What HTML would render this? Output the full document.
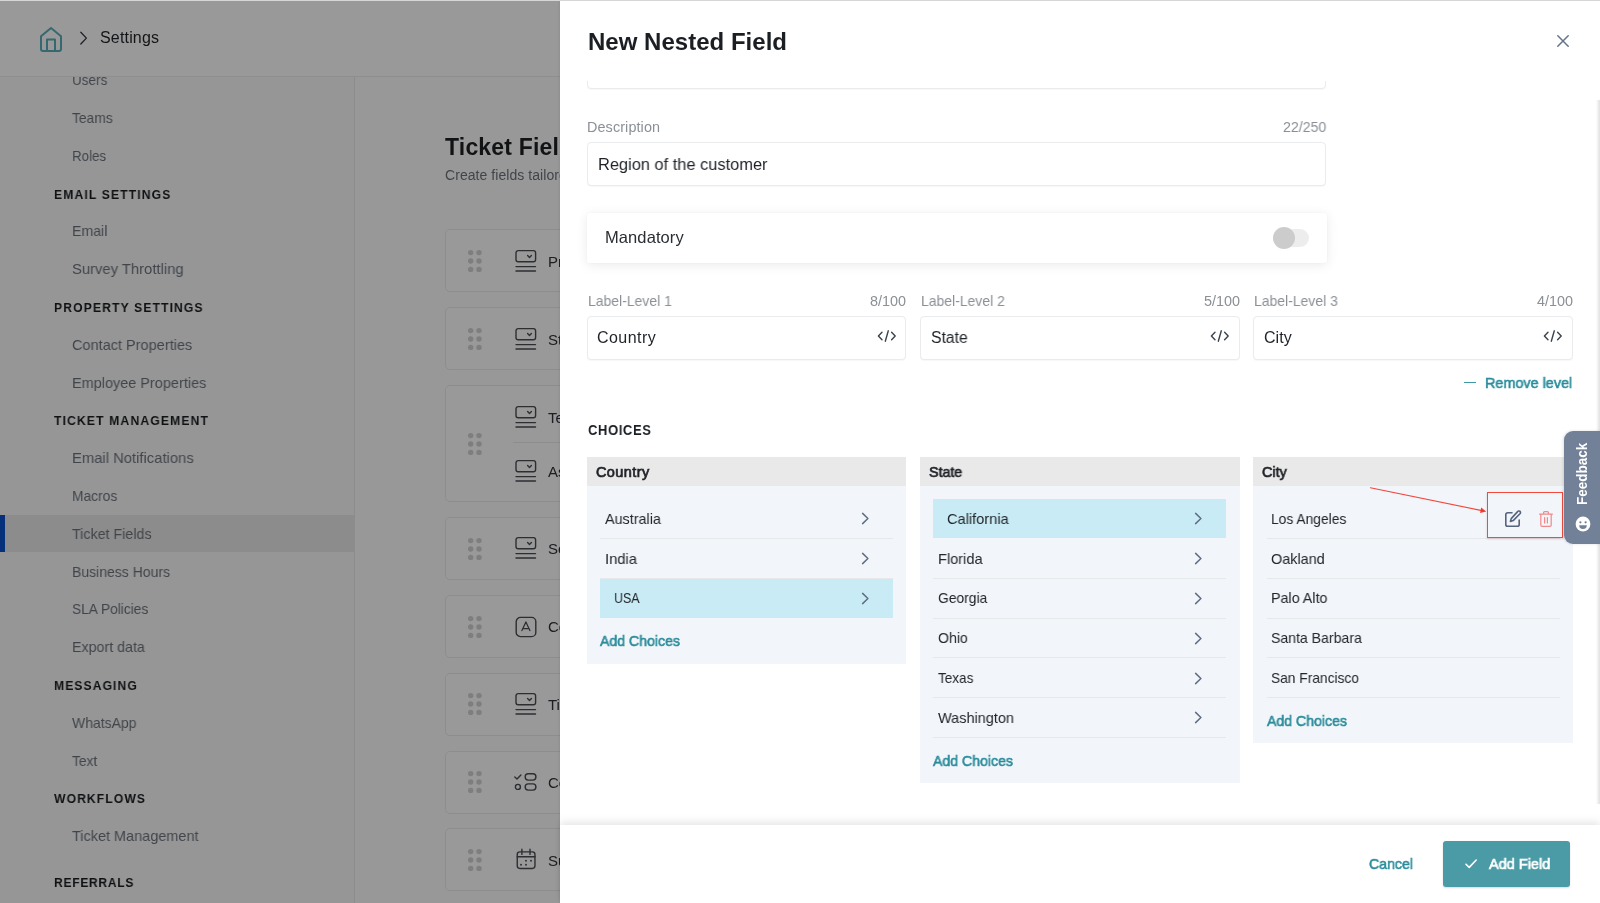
<!DOCTYPE html>
<html lang="en"><head><meta charset="utf-8"><title>New Nested Field - Settings</title>
<style>
*{box-sizing:border-box;margin:0;padding:0}
html,body{width:1600px;height:903px;overflow:hidden;background:#fff}
body{font-family:"Liberation Sans",Arial,sans-serif;color:#1f2328;-webkit-font-smoothing:antialiased}
#app{position:relative;width:1600px;height:903px;overflow:hidden;background:#fff}
.t{position:absolute;white-space:pre;display:block;transform-origin:0 50%;will-change:transform}
svg{position:absolute;overflow:visible;fill:none}

/* top bar */
.topbar{position:absolute;left:0;top:0;width:1600px;height:76.5px;background:#fff;border-bottom:1px solid #ededed;z-index:3}
.home{left:37.6px;top:24.5px;stroke:#5aaebb;stroke-width:2;stroke-linejoin:round;stroke-linecap:round}
.crumb{left:79px;top:30.3px;stroke:#33373c;stroke-width:1.3;stroke-linecap:round;stroke-linejoin:round}

/* sidebar */
.sidebar{position:absolute;left:0;top:76px;width:355px;height:827px;background:#fbfbfb;border-right:1px solid #eaeaea;overflow:hidden;z-index:1}
.sel{position:absolute;left:0;width:354px;height:37.2px;background:#e9e9e9;border-left:5px solid #0b53cc}

/* main */
.content{position:absolute;left:355px;top:76px;width:1245px;height:827px;background:#fefefe;overflow:hidden;z-index:1}
.card{position:absolute;left:90.3px;width:1110px;background:#fff;border:1px solid #ececec;border-radius:5px}
.cdiv{position:absolute;left:158px;width:1040px;height:1px;background:#ececec}
.grip{fill:#d2d2d2}
.fico{stroke:#4a4e54;stroke-width:1.4;stroke-linecap:round;stroke-linejoin:round}

/* scrim */
.scrim{position:absolute;left:0;top:0;width:1600px;height:903px;background:rgba(0,0,0,.4);z-index:5}

/* drawer */
.drawer{position:absolute;left:560px;top:0;width:1040px;height:903px;background:#fff;z-index:6;box-shadow:-1px 0 3px rgba(0,0,0,.08)}
.close{left:996.2px;top:33.8px;stroke:#64738a;stroke-width:1.5;stroke-linecap:round}
.body{position:absolute;left:0;top:81px;width:1040px;height:744px;overflow:hidden}
.inp{position:absolute;border:1px solid #e9ebec;border-radius:4px;background:#fff;box-shadow:0 1px 1px rgba(0,0,0,.03)}
.mand{position:absolute;left:27px;width:739.6px;height:49.5px;background:#fff;border-radius:3px;box-shadow:0 2px 12px rgba(0,0,0,.085),0 0 2px rgba(0,0,0,.04)}
.track{position:absolute;left:714px;width:35px;height:17.5px;border-radius:9px;background:#ededed}
.knob{position:absolute;left:713px;width:22px;height:22px;border-radius:11px;background:#cccccc}
.code{stroke:#3c434b;stroke-width:1.4;stroke-linecap:round;stroke-linejoin:round}
.dash{position:absolute;width:11.5px;height:1.3px;background:#3f98a6}
.col{position:absolute;background:#f2f5f9}
.colh{height:29px;background:#e9e9e9}
.hl{position:absolute;height:38.8px;background:#c9ebf5}
.sep{position:absolute;height:1px;background:#e6e8ea}
.chev{stroke:#5f6e84;stroke-width:1.5;stroke-linecap:round;stroke-linejoin:round}
.edit{stroke:#566480;stroke-width:1.6;stroke-linecap:round;stroke-linejoin:round}
.trash{stroke:#f1898b;stroke-width:1.2;stroke-linecap:round;stroke-linejoin:round}
.redbox{position:absolute;border:1.6px solid #f4493d;box-shadow:0 1px 2px rgba(120,0,0,.18)}
.arrow path{stroke:#f4463b;stroke-width:1.15;stroke-linecap:round}
.arrow .head{fill:#f23a2e;stroke:none}

.foot{position:absolute;left:0;top:825px;width:1040px;height:78px;background:#fff;box-shadow:0 -3px 8px rgba(0,0,0,.10)}
.btn{position:absolute;left:883.2px;top:16px;width:126.8px;height:46.3px;border-radius:3px;background:#4a9ba6;box-shadow:0 1px 2px rgba(0,0,0,.15)}
.check{left:905.3px;top:34.4px;stroke:#fff;stroke-width:1.6;stroke-linecap:round;stroke-linejoin:round}
.scrollshade{position:absolute;right:0;top:100px;width:4px;height:704px;background:linear-gradient(to right,rgba(0,0,0,0),rgba(0,0,0,.12))}

/* feedback */
.feedback{position:absolute;left:1564.2px;top:431px;width:40px;height:113.4px;background:#728198;border-radius:9px 0 0 9px;z-index:8;box-shadow:-1px 0 3px rgba(0,0,0,.12)}
.fbt{top:74.2px;left:10.1px;transform-origin:0 0;transform:rotate(-90deg) scaleX(.9);color:#fff;font-weight:700;font-size:15px;line-height:1;letter-spacing:0;will-change:auto}
.smile{left:10.9px;top:85.3px}
.topline{position:absolute;left:0;top:0;width:1600px;height:1.4px;background:#d6d6d6;z-index:9}

</style></head><body>
<div id="app">
<header class="topbar">
<svg class="home" width="26" height="28" viewBox="0 0 26 28"><path d="M3 11.2 L13 3 L23 11.2 V24 a2 2 0 0 1 -2 2 H5 a2 2 0 0 1 -2 -2 Z" /><path d="M9 26 V14.5 H17 V26"/></svg>
<svg class="crumb" width="10" height="16" viewBox="0 0 10 16"><path d="M1.8 2.2 L7.4 8.1 L1.8 14"/></svg>
<span class="t" style="left:100.18px;top:28.16px;font-size:16px;line-height:20px;color:#1f2328;letter-spacing:0.170px">Settings</span>
</header>
<nav class="sidebar">
<span class="t" style="left:71.70px;top:-5.75px;font-size:15px;line-height:19px;color:#6d747c;transform:scaleX(0.9012)">Users</span>
<span class="t" style="left:71.70px;top:32.05px;font-size:15px;line-height:19px;color:#6d747c;transform:scaleX(0.9211)">Teams</span>
<span class="t" style="left:71.70px;top:69.85px;font-size:15px;line-height:19px;color:#6d747c;transform:scaleX(0.8890)">Roles</span>
<span class="t" style="left:54.23px;top:109.52px;font-size:13.5px;line-height:17px;font-weight:700;color:#1b1d20;transform:scaleX(0.9000);letter-spacing:1.255px">EMAIL SETTINGS</span>
<span class="t" style="left:71.70px;top:145.45px;font-size:15px;line-height:19px;color:#6d747c;transform:scaleX(0.9436)">Email</span>
<span class="t" style="left:71.70px;top:183.25px;font-size:15px;line-height:19px;color:#6d747c;transform:scaleX(0.9867)">Survey Throttling</span>
<span class="t" style="left:54.23px;top:222.92px;font-size:13.5px;line-height:17px;font-weight:700;color:#1b1d20;transform:scaleX(0.9000);letter-spacing:1.239px">PROPERTY SETTINGS</span>
<span class="t" style="left:71.70px;top:258.85px;font-size:15px;line-height:19px;color:#6d747c;transform:scaleX(0.9675)">Contact Properties</span>
<span class="t" style="left:71.70px;top:296.65px;font-size:15px;line-height:19px;color:#6d747c;transform:scaleX(0.9646)">Employee Properties</span>
<span class="t" style="left:54.23px;top:336.32px;font-size:13.5px;line-height:17px;font-weight:700;color:#1b1d20;transform:scaleX(0.9000);letter-spacing:1.266px">TICKET MANAGEMENT</span>
<span class="t" style="left:71.70px;top:372.25px;font-size:15px;line-height:19px;color:#6d747c;transform:scaleX(0.9863)">Email Notifications</span>
<span class="t" style="left:71.70px;top:410.05px;font-size:15px;line-height:19px;color:#6d747c;transform:scaleX(0.9210)">Macros</span>
<div class="sel" style="top:438.5px"></div>
<span class="t" style="left:71.70px;top:447.85px;font-size:15px;line-height:19px;color:#6d747c;transform:scaleX(0.9517)">Ticket Fields</span>
<span class="t" style="left:71.70px;top:485.65px;font-size:15px;line-height:19px;color:#6d747c;transform:scaleX(0.9339)">Business Hours</span>
<span class="t" style="left:71.70px;top:523.45px;font-size:15px;line-height:19px;color:#6d747c;transform:scaleX(0.9138)">SLA Policies</span>
<span class="t" style="left:71.70px;top:561.25px;font-size:15px;line-height:19px;color:#6d747c;transform:scaleX(0.9502)">Export data</span>
<span class="t" style="left:54.23px;top:600.92px;font-size:13.5px;line-height:17px;font-weight:700;color:#1b1d20;transform:scaleX(0.9000);letter-spacing:1.186px">MESSAGING</span>
<span class="t" style="left:71.70px;top:636.85px;font-size:15px;line-height:19px;color:#6d747c;transform:scaleX(0.9320)">WhatsApp</span>
<span class="t" style="left:71.70px;top:674.65px;font-size:15px;line-height:19px;color:#6d747c;transform:scaleX(0.9195)">Text</span>
<span class="t" style="left:54.23px;top:714.32px;font-size:13.5px;line-height:17px;font-weight:700;color:#1b1d20;transform:scaleX(0.9000);letter-spacing:1.203px">WORKFLOWS</span>
<span class="t" style="left:71.70px;top:750.25px;font-size:15px;line-height:19px;color:#6d747c;transform:scaleX(0.9644)">Ticket Management</span>
<span class="t" style="left:54.23px;top:798.22px;font-size:13.5px;line-height:17px;font-weight:700;color:#1b1d20;transform:scaleX(0.9000);letter-spacing:0.713px">REFERRALS</span>
</nav>
<main class="content">
<span class="t" style="left:90.14px;top:57.13px;font-size:23px;line-height:29px;font-weight:700;color:#1d2024;letter-spacing:0.182px">Ticket Fields</span>
<span class="t" style="left:90.32px;top:89.75px;font-size:14px;line-height:18px;color:#6c737b;letter-spacing:0.056px">Create fields tailored to your business</span>
<section class="card" style="top:153.3px;height:63.0px"></section>
<svg class="grip" style="left:111.5px;top:172.8px" width="16" height="24" viewBox="0 0 16 24"><circle cx="3.7" cy="3.6" r="2.7"/><circle cx="12" cy="3.6" r="2.7"/><circle cx="3.7" cy="12" r="2.7"/><circle cx="12" cy="12" r="2.7"/><circle cx="3.7" cy="20.4" r="2.7"/><circle cx="12" cy="20.4" r="2.7"/></svg>
<svg class="fico" style="left:158.5px;top:172.8px" width="24" height="24" viewBox="0 0 24 24"><rect x="2" y="1.6" width="19.6" height="11.2" rx="2.2"/><path d="M13.6 6.6 l1.9 1.9 l1.9 -1.9"/><path d="M2 17.6 H21.5 M2 22 H21.5"/></svg>
<span class="t" style="left:193.10px;top:175.60px;font-size:15px;line-height:19px;color:#2f3338">Priority</span>
<section class="card" style="top:231.2px;height:63.0px"></section>
<svg class="grip" style="left:111.5px;top:250.7px" width="16" height="24" viewBox="0 0 16 24"><circle cx="3.7" cy="3.6" r="2.7"/><circle cx="12" cy="3.6" r="2.7"/><circle cx="3.7" cy="12" r="2.7"/><circle cx="12" cy="12" r="2.7"/><circle cx="3.7" cy="20.4" r="2.7"/><circle cx="12" cy="20.4" r="2.7"/></svg>
<svg class="fico" style="left:158.5px;top:250.7px" width="24" height="24" viewBox="0 0 24 24"><rect x="2" y="1.6" width="19.6" height="11.2" rx="2.2"/><path d="M13.6 6.6 l1.9 1.9 l1.9 -1.9"/><path d="M2 17.6 H21.5 M2 22 H21.5"/></svg>
<span class="t" style="left:193.10px;top:253.50px;font-size:15px;line-height:19px;color:#2f3338">Status</span>
<section class="card" style="top:309.0px;height:117.0px"></section>
<svg class="grip" style="left:111.5px;top:355.5px" width="16" height="24" viewBox="0 0 16 24"><circle cx="3.7" cy="3.6" r="2.7"/><circle cx="12" cy="3.6" r="2.7"/><circle cx="3.7" cy="12" r="2.7"/><circle cx="12" cy="12" r="2.7"/><circle cx="3.7" cy="20.4" r="2.7"/><circle cx="12" cy="20.4" r="2.7"/></svg>
<svg class="fico" style="left:158.5px;top:328.7px" width="24" height="24" viewBox="0 0 24 24"><rect x="2" y="1.6" width="19.6" height="11.2" rx="2.2"/><path d="M13.6 6.6 l1.9 1.9 l1.9 -1.9"/><path d="M2 17.6 H21.5 M2 22 H21.5"/></svg>
<span class="t" style="left:193.10px;top:331.50px;font-size:15px;line-height:19px;color:#2f3338">Team</span>
<svg class="fico" style="left:158.5px;top:382.9px" width="24" height="24" viewBox="0 0 24 24"><rect x="2" y="1.6" width="19.6" height="11.2" rx="2.2"/><path d="M13.6 6.6 l1.9 1.9 l1.9 -1.9"/><path d="M2 17.6 H21.5 M2 22 H21.5"/></svg>
<span class="t" style="left:193.10px;top:385.70px;font-size:15px;line-height:19px;color:#2f3338">Assignee</span>
<div class="cdiv" style="top:366.3px"></div>
<section class="card" style="top:440.8px;height:63.5px"></section>
<svg class="grip" style="left:111.5px;top:460.5px" width="16" height="24" viewBox="0 0 16 24"><circle cx="3.7" cy="3.6" r="2.7"/><circle cx="12" cy="3.6" r="2.7"/><circle cx="3.7" cy="12" r="2.7"/><circle cx="12" cy="12" r="2.7"/><circle cx="3.7" cy="20.4" r="2.7"/><circle cx="12" cy="20.4" r="2.7"/></svg>
<svg class="fico" style="left:158.5px;top:460.3px" width="24" height="24" viewBox="0 0 24 24"><rect x="2" y="1.6" width="19.6" height="11.2" rx="2.2"/><path d="M13.6 6.6 l1.9 1.9 l1.9 -1.9"/><path d="M2 17.6 H21.5 M2 22 H21.5"/></svg>
<span class="t" style="left:193.10px;top:463.10px;font-size:15px;line-height:19px;color:#2f3338">Source</span>
<section class="card" style="top:519.0px;height:63.0px"></section>
<svg class="grip" style="left:111.5px;top:538.5px" width="16" height="24" viewBox="0 0 16 24"><circle cx="3.7" cy="3.6" r="2.7"/><circle cx="12" cy="3.6" r="2.7"/><circle cx="3.7" cy="12" r="2.7"/><circle cx="12" cy="12" r="2.7"/><circle cx="3.7" cy="20.4" r="2.7"/><circle cx="12" cy="20.4" r="2.7"/></svg>
<svg class="fico" style="left:158.5px;top:538.5px" width="24" height="24" viewBox="0 0 24 24"><rect x="2.2" y="2.4" width="19.6" height="19.2" rx="4.2"/><path d="M7.9 15.6 L11.9 6.9 L15.9 15.6 M9.2 13.5 H14.6" stroke-width="1.25"/></svg>
<span class="t" style="left:193.10px;top:541.30px;font-size:15px;line-height:19px;color:#2f3338">Company</span>
<section class="card" style="top:596.7px;height:63.0px"></section>
<svg class="grip" style="left:111.5px;top:616.2px" width="16" height="24" viewBox="0 0 16 24"><circle cx="3.7" cy="3.6" r="2.7"/><circle cx="12" cy="3.6" r="2.7"/><circle cx="3.7" cy="12" r="2.7"/><circle cx="12" cy="12" r="2.7"/><circle cx="3.7" cy="20.4" r="2.7"/><circle cx="12" cy="20.4" r="2.7"/></svg>
<svg class="fico" style="left:158.5px;top:616.2px" width="24" height="24" viewBox="0 0 24 24"><rect x="2" y="1.6" width="19.6" height="11.2" rx="2.2"/><path d="M13.6 6.6 l1.9 1.9 l1.9 -1.9"/><path d="M2 17.6 H21.5 M2 22 H21.5"/></svg>
<span class="t" style="left:193.10px;top:619.00px;font-size:15px;line-height:19px;color:#2f3338">Title</span>
<section class="card" style="top:674.6px;height:63.0px"></section>
<svg class="grip" style="left:111.5px;top:694.1px" width="16" height="24" viewBox="0 0 16 24"><circle cx="3.7" cy="3.6" r="2.7"/><circle cx="12" cy="3.6" r="2.7"/><circle cx="3.7" cy="12" r="2.7"/><circle cx="12" cy="12" r="2.7"/><circle cx="3.7" cy="20.4" r="2.7"/><circle cx="12" cy="20.4" r="2.7"/></svg>
<svg class="fico" style="left:158.5px;top:694.1px" width="24" height="24" viewBox="0 0 24 24"><path d="M0.8 7.0 L3.0 9.0 L6.9 5.0"/><circle cx="3.9" cy="16.9" r="2.5"/><rect x="11.2" y="3.7" width="10.7" height="6.4" rx="3"/><rect x="11.2" y="13.9" width="10.7" height="6.2" rx="3"/></svg>
<span class="t" style="left:193.10px;top:696.90px;font-size:15px;line-height:19px;color:#2f3338">Contact</span>
<section class="card" style="top:752.4px;height:63.0px"></section>
<svg class="grip" style="left:111.5px;top:771.9px" width="16" height="24" viewBox="0 0 16 24"><circle cx="3.7" cy="3.6" r="2.7"/><circle cx="12" cy="3.6" r="2.7"/><circle cx="3.7" cy="12" r="2.7"/><circle cx="12" cy="12" r="2.7"/><circle cx="3.7" cy="20.4" r="2.7"/><circle cx="12" cy="20.4" r="2.7"/></svg>
<svg class="fico" style="left:158.5px;top:771.9px" width="24" height="24" viewBox="0 0 24 24"><rect x="3.25" y="3.85" width="17.7" height="16.6" rx="2.6"/><path d="M3.25 8.8 H20.95 M7.9 1.3 V6.4 M16 1.3 V6.4"/><path d="M12 12.7 h.01 M17 12.7 h.01 M7 16.8 h.01 M12 16.8 h.01" stroke-width="1.9"/></svg>
<span class="t" style="left:193.10px;top:774.70px;font-size:15px;line-height:19px;color:#2f3338">Submitted on</span>
</main>
<div class="scrim"></div>
<aside class="drawer">
<span class="t" style="left:28.37px;top:26.98px;font-size:24px;line-height:30px;font-weight:700;color:#1b1f24;letter-spacing:0.019px">New Nested Field</span>
<svg class="close" width="14" height="14" viewBox="0 0 14 14"><path d="M1.8 1.8 L12.2 12.2 M12.2 1.8 L1.8 12.2"/></svg>
<div class="body">
<div class="inp" style="left:27px;top:-41px;width:739px;height:48.8px"></div>
<span class="t" style="left:27.41px;top:36.91px;font-size:14.4px;line-height:18px;color:#8b9096;letter-spacing:0.102px">Description</span>
<span class="t" style="left:723.11px;top:36.91px;font-size:14.4px;line-height:18px;color:#8b9096;transform:scaleX(0.9837)">22/250</span>
<div class="inp" style="left:27px;top:61.0px;width:739px;height:44px"></div>
<span class="t" style="left:37.87px;top:73.18px;font-size:16.5px;line-height:21px;color:#1f2328;transform:scaleX(0.9936)">Region of the customer</span>
<div class="mand" style="top:132.0px"></div>
<span class="t" style="left:45.17px;top:146.08px;font-size:16.5px;line-height:21px;color:#2a2e33;letter-spacing:0.091px">Mandatory</span>
<div class="track" style="top:148.3px"></div>
<div class="knob" style="top:146.0px"></div>
<span class="t" style="left:27.51px;top:210.91px;font-size:14.4px;line-height:18px;color:#8b9096;transform:scaleX(0.9697)">Label-Level 1</span>
<span class="t" style="left:310.31px;top:210.91px;font-size:14.4px;line-height:18px;color:#8b9096;transform:scaleX(0.9912)">8/100</span>
<div class="inp" style="left:27.0px;top:235.0px;width:319.3px;height:44px"></div>
<span class="t" style="left:37.28px;top:247.36px;font-size:16px;line-height:20px;color:#1f2328;letter-spacing:0.445px">Country</span>
<svg class="code" style="left:316.9px;top:248.8px" width="20" height="12" viewBox="0 0 20 12"><path d="M5 2.2 L1.4 6 L5 9.8 M14.6 2.2 L18.2 6 L14.6 9.8 M11.3 0.8 L8.3 11.2"/></svg>
<span class="t" style="left:360.81px;top:210.91px;font-size:14.4px;line-height:18px;color:#8b9096;transform:scaleX(0.9697)">Label-Level 2</span>
<span class="t" style="left:643.61px;top:210.91px;font-size:14.4px;line-height:18px;color:#8b9096;transform:scaleX(0.9912)">5/100</span>
<div class="inp" style="left:360.3px;top:235.0px;width:319.3px;height:44px"></div>
<span class="t" style="left:370.58px;top:247.36px;font-size:16px;line-height:20px;color:#1f2328;transform:scaleX(0.9824)">State</span>
<svg class="code" style="left:650.2px;top:248.8px" width="20" height="12" viewBox="0 0 20 12"><path d="M5 2.2 L1.4 6 L5 9.8 M14.6 2.2 L18.2 6 L14.6 9.8 M11.3 0.8 L8.3 11.2"/></svg>
<span class="t" style="left:693.81px;top:210.91px;font-size:14.4px;line-height:18px;color:#8b9096;transform:scaleX(0.9697)">Label-Level 3</span>
<span class="t" style="left:976.61px;top:210.91px;font-size:14.4px;line-height:18px;color:#8b9096;transform:scaleX(0.9912)">4/100</span>
<div class="inp" style="left:693.3px;top:235.0px;width:319.3px;height:44px"></div>
<span class="t" style="left:703.58px;top:247.36px;font-size:16px;line-height:20px;color:#1f2328;letter-spacing:0.046px">City</span>
<svg class="code" style="left:983.2px;top:248.8px" width="20" height="12" viewBox="0 0 20 12"><path d="M5 2.2 L1.4 6 L5 9.8 M14.6 2.2 L18.2 6 L14.6 9.8 M11.3 0.8 L8.3 11.2"/></svg>
<div class="dash" style="left:904.0px;top:301.2px"></div>
<span class="t" style="left:925.10px;top:291.80px;font-size:15px;line-height:19px;-webkit-text-stroke:0.60px currentColor;color:#2b8d9c;transform:scaleX(0.9596)">Remove level</span>
<span class="t" style="left:27.71px;top:339.78px;font-size:14.5px;line-height:18px;font-weight:700;color:#1b1f24;transform:scaleX(0.9000);letter-spacing:0.635px">CHOICES</span>
<div class="col" style="left:27.0px;top:376.0px;width:319.4px;height:206.8px"><div class="colh"></div></div>
<span class="t" style="left:36.21px;top:381.88px;font-size:14.5px;line-height:18px;-webkit-text-stroke:0.70px currentColor;color:#1f2328;letter-spacing:0.403px">Country</span>
<div class="sep" style="left:40.4px;top:456.9px;width:293.0px"></div>
<span class="t" style="left:45.10px;top:427.70px;font-size:15px;line-height:19px;color:#23272c;transform:scaleX(0.9579)">Australia</span>
<svg class="chev" style="left:301.0px;top:431.3px" width="9" height="13" viewBox="0 0 9 13"><path d="M1.6 1.4 L6.9 6.5 L1.6 11.6"/></svg>
<div class="sep" style="left:40.4px;top:496.7px;width:293.0px"></div>
<span class="t" style="left:45.10px;top:467.50px;font-size:15px;line-height:19px;color:#23272c;transform:scaleX(0.9806)">India</span>
<svg class="chev" style="left:301.0px;top:471.1px" width="9" height="13" viewBox="0 0 9 13"><path d="M1.6 1.4 L6.9 6.5 L1.6 11.6"/></svg>
<div class="hl" style="left:40.4px;top:497.8px;width:293.0px"></div>
<span class="t" style="left:54.00px;top:507.30px;font-size:15px;line-height:19px;color:#23272c;transform:scaleX(0.8316)">USA</span>
<svg class="chev" style="left:301.0px;top:510.9px" width="9" height="13" viewBox="0 0 9 13"><path d="M1.6 1.4 L6.9 6.5 L1.6 11.6"/></svg>
<span class="t" style="left:40.40px;top:550.40px;font-size:15px;line-height:19px;-webkit-text-stroke:0.60px currentColor;color:#2b8d9c;transform:scaleX(0.9405)">Add Choices</span>
<div class="col" style="left:360.0px;top:376.0px;width:320.0px;height:326.0px"><div class="colh"></div></div>
<span class="t" style="left:369.21px;top:381.88px;font-size:14.5px;line-height:18px;-webkit-text-stroke:0.70px currentColor;color:#1f2328;transform:scaleX(0.9805)">State</span>
<div class="hl" style="left:373.4px;top:418.2px;width:293.0px"></div>
<span class="t" style="left:387.00px;top:427.70px;font-size:15px;line-height:19px;color:#23272c;transform:scaleX(0.9736)">California</span>
<svg class="chev" style="left:634.0px;top:431.3px" width="9" height="13" viewBox="0 0 9 13"><path d="M1.6 1.4 L6.9 6.5 L1.6 11.6"/></svg>
<div class="sep" style="left:373.4px;top:496.7px;width:293.0px"></div>
<span class="t" style="left:378.10px;top:467.50px;font-size:15px;line-height:19px;color:#23272c;transform:scaleX(0.9725)">Florida</span>
<svg class="chev" style="left:634.0px;top:471.1px" width="9" height="13" viewBox="0 0 9 13"><path d="M1.6 1.4 L6.9 6.5 L1.6 11.6"/></svg>
<div class="sep" style="left:373.4px;top:536.5px;width:293.0px"></div>
<span class="t" style="left:378.10px;top:507.30px;font-size:15px;line-height:19px;color:#23272c;transform:scaleX(0.9237)">Georgia</span>
<svg class="chev" style="left:634.0px;top:510.9px" width="9" height="13" viewBox="0 0 9 13"><path d="M1.6 1.4 L6.9 6.5 L1.6 11.6"/></svg>
<div class="sep" style="left:373.4px;top:576.3px;width:293.0px"></div>
<span class="t" style="left:378.10px;top:547.10px;font-size:15px;line-height:19px;color:#23272c;transform:scaleX(0.9404)">Ohio</span>
<svg class="chev" style="left:634.0px;top:550.7px" width="9" height="13" viewBox="0 0 9 13"><path d="M1.6 1.4 L6.9 6.5 L1.6 11.6"/></svg>
<div class="sep" style="left:373.4px;top:616.1px;width:293.0px"></div>
<span class="t" style="left:378.10px;top:586.90px;font-size:15px;line-height:19px;color:#23272c;transform:scaleX(0.9033)">Texas</span>
<svg class="chev" style="left:634.0px;top:590.5px" width="9" height="13" viewBox="0 0 9 13"><path d="M1.6 1.4 L6.9 6.5 L1.6 11.6"/></svg>
<div class="sep" style="left:373.4px;top:655.9px;width:293.0px"></div>
<span class="t" style="left:378.10px;top:626.70px;font-size:15px;line-height:19px;color:#23272c;transform:scaleX(0.9662)">Washington</span>
<svg class="chev" style="left:634.0px;top:630.3px" width="9" height="13" viewBox="0 0 9 13"><path d="M1.6 1.4 L6.9 6.5 L1.6 11.6"/></svg>
<span class="t" style="left:373.40px;top:669.80px;font-size:15px;line-height:19px;-webkit-text-stroke:0.60px currentColor;color:#2b8d9c;transform:scaleX(0.9405)">Add Choices</span>
<div class="col" style="left:693.2px;top:376.0px;width:320.0px;height:286.0px"><div class="colh"></div></div>
<span class="t" style="left:702.41px;top:381.88px;font-size:14.5px;line-height:18px;-webkit-text-stroke:0.70px currentColor;color:#1f2328;transform:scaleX(0.9886)">City</span>
<div class="sep" style="left:706.6px;top:456.9px;width:293.0px"></div>
<span class="t" style="left:711.30px;top:427.70px;font-size:15px;line-height:19px;color:#23272c;transform:scaleX(0.9213)">Los Angeles</span>
<div class="sep" style="left:706.6px;top:496.7px;width:293.0px"></div>
<span class="t" style="left:711.30px;top:467.50px;font-size:15px;line-height:19px;color:#23272c;transform:scaleX(0.9611)">Oakland</span>
<div class="sep" style="left:706.6px;top:536.5px;width:293.0px"></div>
<span class="t" style="left:711.30px;top:507.30px;font-size:15px;line-height:19px;color:#23272c;transform:scaleX(0.9541)">Palo Alto</span>
<div class="sep" style="left:706.6px;top:576.3px;width:293.0px"></div>
<span class="t" style="left:711.30px;top:547.10px;font-size:15px;line-height:19px;color:#23272c;transform:scaleX(0.9387)">Santa Barbara</span>
<div class="sep" style="left:706.6px;top:616.1px;width:293.0px"></div>
<span class="t" style="left:711.30px;top:586.90px;font-size:15px;line-height:19px;color:#23272c;transform:scaleX(0.9179)">San Francisco</span>
<span class="t" style="left:706.60px;top:630.00px;font-size:15px;line-height:19px;-webkit-text-stroke:0.60px currentColor;color:#2b8d9c;transform:scaleX(0.9405)">Add Choices</span>
<svg class="edit" style="left:944.0px;top:428.6px" width="18" height="18" viewBox="0 0 18 18"><path d="M8 2.8 H3.6 A1.8 1.8 0 0 0 1.8 4.6 V14.4 A1.8 1.8 0 0 0 3.6 16.2 H13.4 A1.8 1.8 0 0 0 15.2 14.4 V10"/><path d="M13.6 1.6 a1.45 1.45 0 0 1 2.6 1.9 L9.2 10.6 L6.4 11.4 L7.2 8.6 Z"/></svg>
<svg class="trash" style="left:978.2px;top:428.6px" width="16" height="18" viewBox="0 0 16 18"><path d="M1.6 4.2 H14.4 M5.6 4 V2.6 A1 1 0 0 1 6.6 1.6 H9.4 A1 1 0 0 1 10.4 2.6 V4 M2.8 4.4 V15 A1.4 1.4 0 0 0 4.2 16.4 H11.8 A1.4 1.4 0 0 0 13.2 15 V4.4 M6.6 7.6 V13 M9.4 7.6 V13"/></svg>
<div class="redbox" style="left:927.0px;top:410.8px;width:75.6px;height:45.8px"></div>
<svg class="arrow" style="left:810.0px;top:404.0px" width="130" height="40" viewBox="0 0 130 40"><path d="M0.4 2.8 L112 25.6" /><path class="head" d="M116.2 26.5 L111.2 22.6 L110.1 28.0 Z"/></svg>
</div>
<footer class="foot">
<span class="t" style="left:809.45px;top:29.10px;font-size:15px;line-height:19px;-webkit-text-stroke:0.60px currentColor;color:#2b8d9c;transform:scaleX(0.9421)">Cancel</span>
<div class="btn"></div>
<svg class="check" width="13" height="10" viewBox="0 0 13 10"><path d="M1 5.2 L4.2 8.4 L11.2 1"/></svg>
<span class="t" style="left:929.30px;top:29.10px;font-size:15px;line-height:19px;-webkit-text-stroke:0.65px currentColor;color:#ffffff;transform:scaleX(0.9673)">Add Field</span>
</footer>
<div class="scrollshade"></div>
</aside>
<div class="feedback"><span class="t fbt" id="fb">Feedback</span><svg class="smile" width="16" height="16" viewBox="0 0 16 16"><circle cx="8" cy="8" r="7.4" fill="#fff"/><circle cx="5.4" cy="6.3" r="1.1" fill="#718198"/><circle cx="10.6" cy="6.3" r="1.1" fill="#718198"/><path d="M4.2 9.2 H11.8 A3.8 3.8 0 0 1 4.2 9.2 Z" fill="#718198"/></svg></div>
<div class="topline"></div>
</div></body></html>
